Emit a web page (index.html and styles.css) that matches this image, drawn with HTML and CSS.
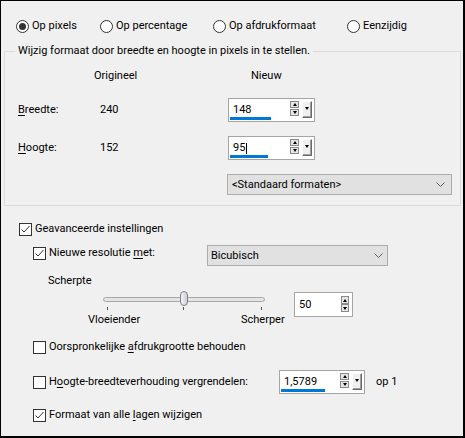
FILE: index.html
```html
<!DOCTYPE html>
<html>
<head>
<meta charset="utf-8">
<link rel="stylesheet" href="styles.css">
</head>
<body>
<div class="win">
  <div class="radios">
    <label class="opt"><span class="radio on"></span><span>Op pixels</span></label>
    <label class="opt"><span class="radio"></span><span>Op percentage</span></label>
    <label class="opt"><span class="radio"></span><span>Op afdrukformaat</span></label>
    <label class="opt"><span class="radio"></span><span>Eenzijdig</span></label>
  </div>

  <fieldset class="group">
    <legend>Wijzig formaat door breedte en hoogte in pixels in te stellen.</legend>
    <div class="hdr"><span>Origineel</span><span>Nieuw</span></div>
    <div class="dim r1">
      <span><u>B</u>reedte:</span>
      <span>240</span>
      <div class="spin spin-new">
        <div class="field"><span class="txt">148</span><span class="bar" style="width:41px"></span></div>
        <div class="updown"><span class="ud up"></span><span class="ud dn"></span></div>
        <div class="ddbtn"></div>
      </div>
    </div>
    <div class="dim r2">
      <span><u>H</u>oogte:</span>
      <span>152</span>
      <div class="spin spin-new">
        <div class="field"><span class="txt">95<span class="caret"></span></span><span class="bar" style="width:38px"></span></div>
        <div class="updown"><span class="ud up"></span><span class="ud dn"></span></div>
        <div class="ddbtn"></div>
      </div>
    </div>
    <div class="select std">
      <span>&lt;Standaard formaten&gt;</span>
      <svg class="chev" width="9" height="5" viewBox="0 0 9 5"><polyline points="0.5,0.5 4.5,4.5 8.5,0.5" fill="none" stroke="#606060" stroke-width="1"/></svg>
    </div>
  </fieldset>

  <div class="crow adv">
    <span class="cb"><svg width="11" height="11" viewBox="0 0 11 11"><polyline points="1.5,5.5 4,8 9.5,2" fill="none" stroke="#333" stroke-width="1"/></svg></span>
    <span>Geavanceerde instellingen</span>
  </div>

  <div class="res">
    <div class="res-label">
      <span class="cb"><svg width="11" height="11" viewBox="0 0 11 11"><polyline points="1.5,5.5 4,8 9.5,2" fill="none" stroke="#333" stroke-width="1"/></svg></span>
      <span>Nieuwe resolutie <u>m</u>et:</span>
    </div>
    <div class="select bic">
      <span>Bicubisch</span>
      <svg class="chev" width="9" height="5" viewBox="0 0 9 5"><polyline points="0.5,0.5 4.5,4.5 8.5,0.5" fill="none" stroke="#606060" stroke-width="1"/></svg>
    </div>
  </div>

  <div class="sharp">Scherpte</div>

  <div class="slider-area">
    <div class="sl-col">
      <div class="slider">
        <span class="track"></span>
        <span class="tick t1"></span>
        <span class="tick t2"></span>
        <span class="tick t3"></span>
        <span class="thumb"></span>
      </div>
      <div class="sl-labels"><span>Vloeiender</span><span>Scherper</span></div>
    </div>
    <div class="spin spin50">
      <div class="field f50"><span class="txt">50</span></div>
      <div class="updown ud50"><span class="ud up"></span><span class="ud dn"></span></div>
    </div>
  </div>

  <div class="crow keep">
    <span class="cb"></span>
    <span>Oorspronkelijke <u>a</u>fdrukgrootte behouden</span>
  </div>

  <div class="lock">
    <div class="lock-label">
      <span class="cb"></span>
      <span>H<u>o</u>ogte-breedteverhouding vergrendelen:</span>
    </div>
    <div class="spin spin-ratio">
      <div class="field"><span class="txt">1,5789</span><span class="bar" style="width:44px"></span></div>
      <div class="updown"><span class="ud up"></span><span class="ud dn"></span></div>
      <div class="ddbtn"></div>
    </div>
    <span class="op1">op 1</span>
  </div>

  <div class="crow all">
    <span class="cb"><svg width="11" height="11" viewBox="0 0 11 11"><polyline points="1.5,5.5 4,8 9.5,2" fill="none" stroke="#333" stroke-width="1"/></svg></span>
    <span>Formaat van alle <u>l</u>agen wijzigen</span>
  </div>
</div>
</body>
</html>
```

FILE: styles.css
```css
* { box-sizing: border-box; }

body { margin: 0; }

.win {
  width: 465px;
  height: 438px;
  border-style: solid;
  border-color: #000;
  border-width: 1px 2px 2px 1px;
  background: #f0f0f0;
  font-family: Roboto, "Noto Sans", Arial, sans-serif;
  font-size: 11px;
  line-height: 16px;
  color: #000;
  overflow: hidden;
}

u { text-underline-offset: 2px; }

/* radio row */
.radios {
  display: grid;
  grid-template-columns: 84px 113px 134px auto;
  margin: 17px 0 0 15px;
  height: 16px;
}
.opt { display: flex; align-items: center; gap: 3px; white-space: nowrap; }
.radio {
  width: 13px; height: 13px;
  border: 1px solid #333;
  border-radius: 50%;
  background: #fff;
  display: flex; align-items: center; justify-content: center;
  flex: none;
}
.radio.on::after {
  content: "";
  width: 7px; height: 7px;
  border-radius: 50%;
  background: #333;
}

/* group */
.group {
  margin: 9px 2px 0 3px;
  padding: 0 0 10px;
  border: 1px solid #dcdcdc;
  min-width: 0;
}
.group legend {
  margin-left: 10px;
  padding: 0 3px;
  line-height: 16px;
}
.hdr {
  display: grid;
  grid-template-columns: 157px auto;
  padding-left: 89px;
  margin-top: 9px;
  height: 16px;
}
.dim {
  display: grid;
  grid-template-columns: 82px 128px auto;
  padding-left: 13px;
  align-items: center;
  height: 24px;
  margin-top: 14px;
}

/* spin boxes */
.spin {
  display: flex;
  border: 1px solid #a5a5a5;
  background: #fff;
}
.spin-new { width: 87px; height: 24px; }
.spin-ratio { width: 86px; height: 24px; }
.spin50 { width: 59px; height: 25px; margin-top: 1px; }

.field {
  flex: 1;
  display: flex;
  flex-direction: column;
  align-items: flex-start;
  padding: 4px 0 0 1px;
}
.txt { padding-left: 3px; line-height: 14px; height: 14px; display: flex; align-items: center; }
.bar { height: 3px; background: #0078d7; }
.caret { display: inline-block; width: 1px; height: 11px; background: #000; margin-left: 1px; }
.f50 { justify-content: center; padding: 0 0 0 1px; }

.updown {
  display: flex;
  flex-direction: column;
  gap: 1px;
  width: 9px;
  margin: 2px 3px 0 0;
}
.ud {
  height: 7px;
  border: 1px solid #8a8a8a;
  background: #e6e6e6;
  display: flex; align-items: center; justify-content: center;
}
.ud.up::after {
  content: "";
  border-left: 2.5px solid transparent;
  border-right: 2.5px solid transparent;
  border-bottom: 3px solid #000;
}
.ud.dn::after {
  content: "";
  border-left: 2.5px solid transparent;
  border-right: 2.5px solid transparent;
  border-top: 3px solid #000;
}
.ud50 { margin: 3px 3px 0 0; width: 8px; gap: 0; }
.ud50 .ud { height: 8px; }

.ddbtn {
  width: 10px;
  height: 17px;
  margin: 2px 2px 0 0;
  border: 1px solid;
  border-color: #fff #696969 #696969 #fff;
  box-shadow: inset -1px -1px 0 #a0a0a0;
  background: #f0f0f0;
  display: flex;
  justify-content: center;
  padding-top: 5px;
}
.ddbtn::after {
  content: "";
  width: 0; height: 0;
  border-left: 2.5px solid transparent;
  border-right: 2.5px solid transparent;
  border-top: 3px solid #000;
}

/* select boxes */
.select {
  display: flex;
  align-items: center;
  justify-content: space-between;
  border: 1px solid #adadad;
  background: #e1e1e1;
  height: 21px;
  padding: 0 6px 0 4px;
}
.std { margin: 14px 0 0 222px; width: 225px; }
.bic { width: 181px; padding-right: 4px; padding-left: 3px; }

/* checkbox rows */
.cb {
  width: 13px; height: 13px;
  border: 1px solid #333;
  background: #fff;
  flex: none;
  display: flex; align-items: center; justify-content: center;
}
.cb svg { display: block; }
.crow {
  display: flex;
  align-items: center;
  gap: 3px;
  height: 16px;
}
.adv { margin: 15px 0 0 18px; }

.res {
  display: grid;
  grid-template-columns: 174px 181px;
  margin: 8px 0 0 32px;
  height: 21px;
}
.res-label { display: flex; align-items: flex-start; gap: 3px; }
.res-label .cb { margin-top: 2px; }

.sharp { margin: 7px 0 0 47px; height: 16px; }

/* slider */
.slider-area { display: flex; margin: 2px 0 0 87px; align-items: flex-start; }
.sl-col { width: 206px; }
.slider { position: relative; margin-left: 15px; width: 162px; height: 21px; }
.track {
  position: absolute;
  left: 0; top: 6px;
  width: 162px; height: 5px;
  border: 1px solid #a8a8a8;
  border-radius: 3px;
  background: #e4e4e4;
}
.tick { position: absolute; top: 16px; width: 1px; height: 3px; background: #555; }
.t1 { left: 4px; }
.t2 { left: 80px; }
.t3 { left: 158px; }
.thumb {
  position: absolute;
  left: 77px; top: 0;
  width: 8px; height: 15px;
  border: 1px solid #7f7f8c;
  border-radius: 4px;
  background: linear-gradient(to right, #f2f2f6, #cfcfd9);
}
.sl-labels { display: grid; grid-template-columns: 153px auto; height: 16px; }

.keep { margin: 11px 0 0 32px; }

.lock {
  display: grid;
  grid-template-columns: 246px 86px auto;
  align-items: center;
  margin: 15px 0 0 32px;
  height: 24px;
}
.lock-label { display: flex; align-items: center; gap: 3px; }
.op1 { margin-left: 11px; }

.all { margin: 13px 0 0 32px; }
```
